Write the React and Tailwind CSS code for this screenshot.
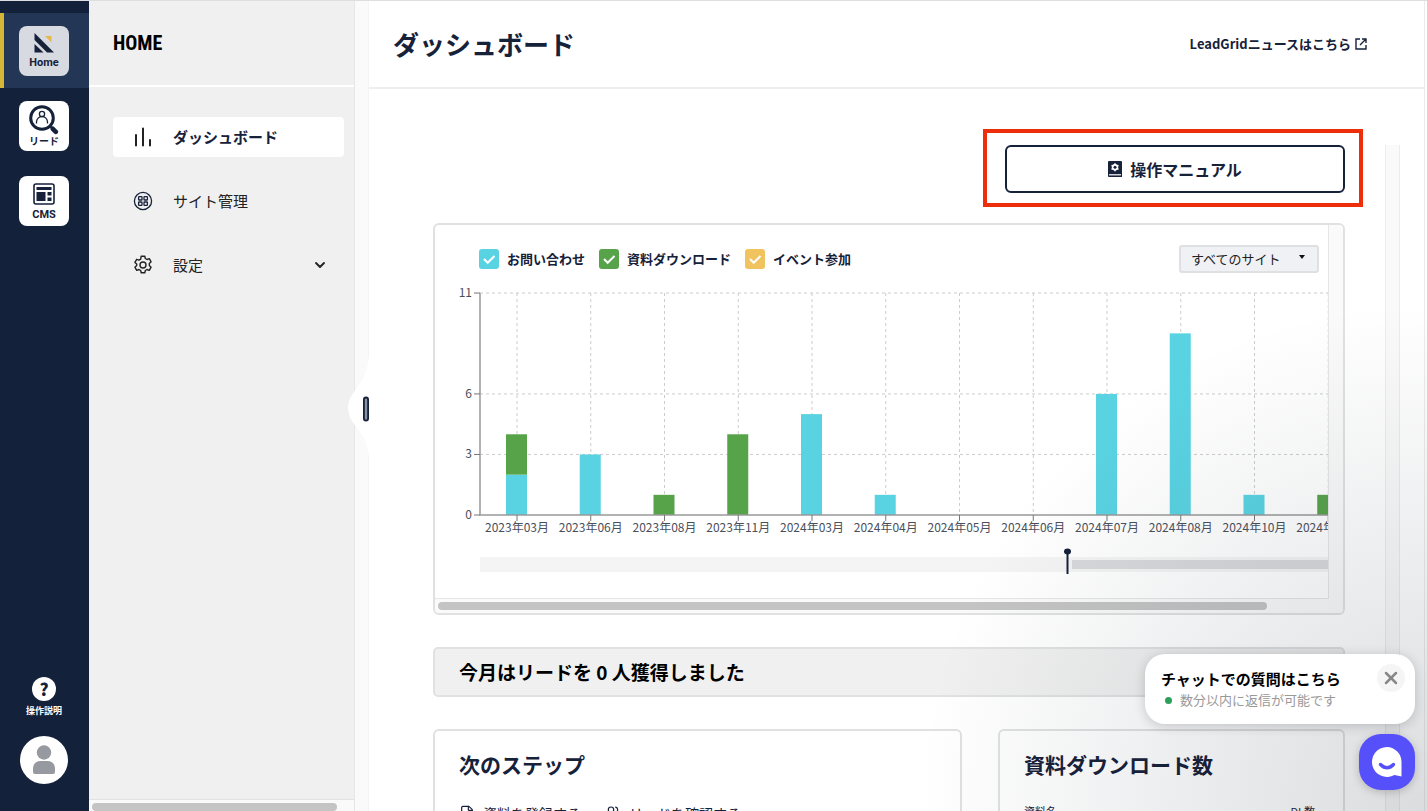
import { useState } from 'react'
import { ChevronDown, File, Users, X } from 'lucide-react'

const series = [
  { id: 'contact', label: 'お問い合わせ', box: 'bg-[#59d3e2]', color: '#59d3e2' },
  { id: 'download', label: '資料ダウンロード', box: 'bg-[#57a34a]', color: '#57a34a' },
  { id: 'event', label: 'イベント参加', box: 'bg-[#f0c35e]', color: '#f0c35e' }
]

const months = [
  { label: '2023年03月', contact: 2, download: 2, event: 0 },
  { label: '2023年06月', contact: 3, download: 0, event: 0 },
  { label: '2023年08月', contact: 0, download: 1, event: 0 },
  { label: '2023年11月', contact: 0, download: 4, event: 0 },
  { label: '2024年03月', contact: 5, download: 0, event: 0 },
  { label: '2024年04月', contact: 1, download: 0, event: 0 },
  { label: '2024年05月', contact: 0, download: 0, event: 0 },
  { label: '2024年06月', contact: 0, download: 0, event: 0 },
  { label: '2024年07月', contact: 6, download: 0, event: 0 },
  { label: '2024年08月', contact: 9, download: 0, event: 0 },
  { label: '2024年10月', contact: 1, download: 0, event: 0 },
  { label: '2024年11月', contact: 0, download: 1, event: 0 }
]

function HomeLogo() {
  return (
    <svg width="20" height="20" viewBox="0 0 20 20">
      <path d="M0.500 0L20 19.500H13L0.500 7Z" fill="#16213a" />
      <path d="M0.500 11L9.500 19.500H0.500Z" fill="#16213a" />
      <path d="M11 3H17.500V9.500Z" fill="#e9b64a" />
    </svg>
  )
}

function LeadIcon() {
  return (
    <svg width="30" height="30" viewBox="0 0 30 30" fill="none" stroke="#16213a">
      <circle cx="13" cy="13" r="11.300" strokeWidth="3" />
      <circle cx="13" cy="9" r="2.600" strokeWidth="1.300" />
      <path d="M7.500 18.500v-1.500a5.500 5.500 0 0 1 11 0v1.500" strokeWidth="1.300" />
      <path d="M21 21l2.500 2.500" strokeWidth="2" />
      <path d="M23.800 23.800l3 3" strokeWidth="4.600" strokeLinecap="round" />
    </svg>
  )
}

function CmsIcon() {
  return (
    <svg width="22" height="22" viewBox="0 0 22 22">
      <rect x="1" y="1" width="20" height="20" rx="2" fill="none" stroke="#16213a" strokeWidth="1.600" />
      <path d="M3.500 4h15v3h-15zM3.500 9h9v9h-9zM14.500 9h4v3.500h-4zM14.500 14.500h4v3.500h-4z" fill="#16213a" />
    </svg>
  )
}

function BarsIcon() {
  return (
    <svg width="20" height="20" viewBox="0 0 20 20" stroke="#222" strokeWidth="2" strokeLinecap="round">
      <path d="M3 8v10.500M10 1.500v17M17 13v5.500" />
    </svg>
  )
}

function SiteIcon() {
  return (
    <svg width="20" height="20" viewBox="0 0 20 20" fill="none" stroke="#16213a" strokeWidth="1.300">
      <circle cx="10" cy="10" r="8.600" />
      <rect x="5.600" y="5.600" width="3.400" height="3.400" rx="0.600" />
      <rect x="11" y="5.600" width="3.400" height="3.400" rx="0.600" />
      <rect x="5.600" y="11" width="3.400" height="3.400" rx="0.600" />
      <rect x="11" y="11" width="3.400" height="3.400" rx="0.600" />
    </svg>
  )
}

function GearIcon() {
  return (
    <svg width="20" height="20" viewBox="0 0 20 20" fill="none" stroke="#222" strokeWidth="1.400" strokeLinejoin="round">
      <path d="M8.200 1.200h3.600l.5 2.300 1.700 1 2.300-.8 1.800 3.100-1.800 1.600v2.200l1.800 1.600-1.800 3.100-2.300-.8-1.700 1-.5 2.300H8.200l-.5-2.300-1.700-1-2.300.8-1.800-3.100 1.800-1.600V9l-1.800-1.600 1.800-3.100 2.300.8 1.700-1z" />
      <circle cx="10" cy="10" r="3" />
    </svg>
  )
}

function ExternalIcon() {
  return (
    <svg width="12" height="12" viewBox="0 0 12 12" fill="none" stroke="#16213a" strokeWidth="1.400">
      <path d="M5 1H1v10h10V7M7 1h4v4M11 1L5 7" />
    </svg>
  )
}

function ManualIcon() {
  return (
    <svg width="14" height="16" viewBox="0 0 14 16">
      <path d="M1 0h12a1 1 0 0 1 1 1v15H1a1 1 0 0 1-1-1V1a1 1 0 0 1 1-1z" fill="#16213a" />
      <path d="M1 13.800h12" stroke="#fff" strokeWidth="1.200" />
      <circle cx="7" cy="6.300" r="2.300" fill="none" stroke="#fff" strokeWidth="1.900" />
      <path d="M7 2.300v8M3.500 4.300l7 4M3.500 8.300l7-4" stroke="#fff" strokeWidth="1.500" />
      <circle cx="7" cy="6.300" r="1.500" fill="#16213a" />
    </svg>
  )
}

function LeadChart({ active }) {
  const y = v => 230 - v * 20.18
  const x = i => 82 + i * 73.75
  return (
    <svg width="965" height="313" viewBox="0 0 965 313" className="block max-w-none">
      {[3, 6, 11].map(v => (
        <path key={v} d={`M45 ${y(v)}H965`} stroke="#ccc" strokeDasharray="3 3" />
      ))}
      {months.map((m, i) => (
        <path key={m.label} d={`M${x(i)} 8V230`} stroke="#ccc" strokeDasharray="3 3" />
      ))}
      {months.map((m, i) => {
        let total = 0
        return series.filter(s => active[s.id] && m[s.id] > 0).map(s => {
          total += m[s.id]
          return (
            <rect key={m.label + s.id} x={x(i) - 11} y={y(total)} width="21" height={m[s.id] * 20.18} fill={s.color} />
          )
        })
      })}
      {/* Axes */}
      <path d="M45 8V230H965" fill="none" stroke="#999" strokeWidth="1.500" />
      {[0, 3, 6, 11].map(v => (
        <g key={v}>
          <path d={`M39 ${y(v)}H45`} stroke="#777" />
          <text x="37" y={y(v) + 4} textAnchor="end" className="fill-[#4a4f5c] text-[12px]">{v}</text>
        </g>
      ))}
      {months.map((m, i) => (
        <g key={m.label}>
          <path d={`M${x(i)} 230v6`} stroke="#777" />
          <text x={x(i)} y="247" textAnchor="middle" className="fill-[#4a4f5c] text-[12px]">{m.label}</text>
        </g>
      ))}
      {/* Range slider */}
      <rect x="45" y="272" width="920" height="15" fill="#f4f4f4" />
      <rect x="637" y="275" width="328" height="9" fill="#d8d9dc" />
      <path d="M632.500 267v22" stroke="#16213a" strokeWidth="2" />
      <ellipse cx="632.500" cy="266.500" rx="3.500" ry="3" fill="#16213a" />
    </svg>
  )
}

export default function App() {
  const [active, setActive] = useState({ contact: true, download: true, event: true })
  const [chatOpen, setChatOpen] = useState(true)

  return (
    <div className="relative flex h-screen overflow-hidden border-t border-[#dcdfe2] bg-white font-['Noto_Sans_CJK_JP',sans-serif] text-[#16213a]">
      {/* App rail */}
      <nav className="flex w-[89px] shrink-0 flex-col bg-[#14213a] pt-3">
        <a href="#home" className="relative flex h-[75px] items-center justify-center bg-[#243655] pr-px">
          <span className="absolute inset-y-0 left-0 w-1 bg-[#d5b738]" />
          <span className="flex size-[50px] flex-col items-center justify-center gap-1 rounded-lg bg-[#d8dae1] pt-px">
            <HomeLogo />
            <span className="font-[Roboto,sans-serif] text-[11px] leading-3 font-bold">Home</span>
          </span>
        </a>
        <a href="#lead" className="flex h-[75px] items-center justify-center pr-px">
          <span className="flex size-[50px] flex-col items-center justify-center rounded-lg bg-white">
            <LeadIcon />
            <span className="text-[10px] leading-3 font-bold">リード</span>
          </span>
        </a>
        <a href="#cms" className="flex h-[75px] items-center justify-center pr-px">
          <span className="flex size-[50px] flex-col items-center justify-center gap-1 rounded-lg bg-white pt-[3px]">
            <CmsIcon />
            <span className="font-[Roboto,sans-serif] text-[11px] leading-3 font-bold">CMS</span>
          </span>
        </a>
        <div className="mt-auto flex flex-col items-center pr-px pb-[27px]">
          <a href="#help" className="flex flex-col items-center gap-1 text-white">
            <span className="flex size-6 items-center justify-center rounded-full bg-white text-[17px] leading-6 font-black text-[#16213a]">?</span>
            <span className="text-[9px] leading-3 font-bold">操作説明</span>
          </a>
          <button aria-label="アカウント" className="mt-[19px] flex size-12 items-center justify-center rounded-full bg-white">
            <svg width="24" height="30" viewBox="0 0 24 30" fill="#96999f">
              <circle cx="12" cy="7.500" r="7.200" />
              <path d="M1 27v-4a7 7 0 0 1 7-7h8a7 7 0 0 1 7 7v4a2 2 0 0 1-2 2H3a2 2 0 0 1-2-2z" />
            </svg>
          </button>
        </div>
      </nav>

      {/* Sub menu */}
      <aside className="flex w-[266px] shrink-0 flex-col border-r border-[#e6e6e6] bg-[#f0f0f0]">
        <div className="flex h-[86px] items-center border-b-2 border-white px-6">
          <h2 className="font-['Liberation_Sans_Narrow','Roboto_Condensed',Roboto,sans-serif] text-xl leading-6 font-bold text-black">HOME</h2>
        </div>
        <ul className="flex flex-1 flex-col gap-6 pt-[30px] pr-[10px] pl-6 text-[15px] leading-6">
          <li>
            <a href="#dashboard" className="flex h-10 items-center gap-5 rounded bg-white pl-5 font-bold">
              <BarsIcon />
              ダッシュボード
            </a>
          </li>
          <li>
            <a href="#sites" className="flex h-10 items-center gap-5 pl-5 text-[#222]">
              <SiteIcon />
              サイト管理
            </a>
          </li>
          <li>
            <button className="flex h-10 w-full items-center gap-5 pr-4 pl-5 text-[#222]">
              <GearIcon />
              設定
              <ChevronDown className="ml-auto size-4" strokeWidth={2.8} />
            </button>
          </li>
        </ul>
        <div className="h-3 border-t border-[#e2e2e2] bg-[#fafafa] pt-[3px] pl-[3px]">
          <div className="h-2 w-[245px] rounded-full bg-[#c4c4c4]" />
        </div>
      </aside>

      {/* Resize handle */}
      <div className="relative flex w-[14px] shrink-0 items-center border-r border-[#f4f4f4] bg-[#fafafa]">
        <svg width="24" height="104" viewBox="0 0 24 104" className="absolute -right-px">
          <path d="M24 0C22 34 4 34 3 54C4 74 22 74 24 104Z" fill="#fff" />
          <rect x="18.900" y="43.500" width="4.200" height="23" rx="2.100" fill="#8492a2" stroke="#16213a" strokeWidth="1.800" />
        </svg>
      </div>

      {/* Main */}
      <main className="mr-[2px] flex min-w-0 flex-1 flex-col border-r border-[#ececec]">
        <header className="flex h-[88px] shrink-0 items-center justify-between border-b-2 border-[#eee] pr-[57px] pl-6">
          <h1 className="text-[26px] leading-9 font-bold">ダッシュボード</h1>
          <a href="#news" className="flex items-center gap-1 text-[13px] leading-5 font-bold">
            LeadGridニュースはこちら
            <ExternalIcon />
          </a>
        </header>

        <div className="mt-14 mr-6 flex min-h-0 flex-1">
          <div className="flex min-w-0 flex-1 flex-col pr-10 pl-16">
            <div className="flex justify-end">
              <div className="relative w-[340px]">
                <button className="flex h-12 w-full items-center justify-center gap-2 rounded-md border-2 border-[#16213a] bg-white text-base font-bold">
                  <ManualIcon />
                  操作マニュアル
                </button>
                <span className="pointer-events-none absolute -top-4 -right-[18px] -bottom-[14px] -left-[22px] border-4 border-[#ee2d0a]" />
              </div>
            </div>

            {/* Chart */}
            <section className="mt-[30px] flex shrink-0 overflow-hidden rounded-md border-2 border-[#e0e1e1]">
              <div className="min-w-0 flex-1">
                <div className="overflow-hidden border-r border-b border-[#e6e6e6]">
                  <div className="flex h-[60px] items-center justify-between pt-2 pr-[9px] pl-11">
                    <div className="flex items-center gap-[14px]">
                      {series.map(s => (
                        <label key={s.id} className="flex items-center gap-2 text-[13px] leading-5 font-bold">
                          <span className={`relative size-5 rounded-[3px] ${s.box}`}>
                            <input
                              type="checkbox"
                              checked={active[s.id]}
                              onChange={() => setActive({ ...active, [s.id]: !active[s.id] })}
                              className="block size-5 appearance-none"
                            />
                            {active[s.id] && (
                              <svg viewBox="0 0 20 20" className="pointer-events-none absolute inset-0 size-5" fill="none" stroke="#fff" strokeWidth="2">
                                <path d="M5 10l3.700 3.800L15.500 7" />
                              </svg>
                            )}
                          </span>
                          {s.label}
                        </label>
                      ))}
                    </div>
                    <div className="relative">
                      <select aria-label="サイト" className="block h-7 w-[140px] appearance-none rounded-[3px] border-2 border-[#dfe0e2] bg-[#f0f1f4] pl-[10px] text-[13px] leading-5 text-[#222]">
                        <option>すべてのサイト</option>
                      </select>
                      <span className="pointer-events-none absolute top-[10px] right-[14px] border-x-[3px] border-t-4 border-x-transparent border-t-[#111]" />
                    </div>
                  </div>
                  <LeadChart active={active} />
                </div>
                <div className="h-[14px] bg-[#fafafa] pt-[3px] pl-[3px]">
                  <div className="h-2 w-[93%] rounded-full bg-[#c4c4c4]" />
                </div>
              </div>
              <div className="w-[14px] shrink-0 bg-[#fafafa]" />
            </section>

            <p className="mt-8 flex h-[50px] shrink-0 items-center rounded-[5px] border-2 border-[#e0e1e1] bg-[#f0f0f0] px-6 text-[19px] leading-7 font-bold text-black">
              今月はリードを 0 人獲得しました
            </p>

            <div className="mt-8 grid grid-cols-[529fr_347fr] gap-9">
              <section className="h-60 rounded-md border-2 border-[#e0e1e1] px-6 pt-4">
                <h2 className="text-[21px] leading-[34px] font-bold">次のステップ</h2>
                <div className="mt-5 flex gap-6 text-sm leading-6">
                  <a href="#register" className="flex items-center gap-2">
                    <File className="size-4" strokeWidth={1.8} />
                    資料を登録する
                  </a>
                  <a href="#leads" className="flex items-center gap-2">
                    <Users className="size-4" strokeWidth={1.8} />
                    リードを確認する
                  </a>
                </div>
              </section>
              <section className="h-60 rounded-md border-2 border-[#e0e1e1] px-6 pt-4">
                <h2 className="text-[21px] leading-[34px] font-bold">資料ダウンロード数</h2>
                <table className="mt-5 w-full text-[11px] leading-5">
                  <thead>
                    <tr>
                      <th className="text-left font-normal">資料名</th>
                      <th className="pr-1 text-right font-normal">DL数</th>
                    </tr>
                  </thead>
                </table>
              </section>
            </div>
          </div>
          <div className="w-[15px] shrink-0 border-x border-[#ececec] bg-[#fafafa]" />
        </div>
      </main>

      {/* Chat */}
      <div className="pointer-events-none absolute right-0 bottom-0 size-[500px] bg-[radial-gradient(ellipse_at_bottom_right,rgba(29,39,54,0.16)_0,rgba(29,39,54,0)_72%)]" />
      {chatOpen && (
        <div className="absolute right-3 bottom-[87px] flex h-[70px] w-[270px] justify-between rounded-[20px] bg-white pt-[14px] pr-[10px] pl-4 shadow-[0_2px_12px_rgba(0,0,0,0.18)]">
          <div>
            <p className="text-[15px] leading-[22px] font-bold text-black">チャットでの質問はこちら</p>
            <p className="flex items-center gap-2 pl-1 text-[13px] leading-5 text-[#999]">
              <span className="size-[7px] rounded-full bg-[#2ca05a]" />
              数分以内に返信が可能です
            </p>
          </div>
          <button aria-label="閉じる" onClick={() => setChatOpen(false)} className="-mt-1 flex size-7 items-center justify-center rounded-full bg-[#f5f5f5]">
            <X className="size-5 text-[#888]" strokeWidth={3} />
          </button>
        </div>
      )}
      <button aria-label="チャット" className="absolute right-3 bottom-[21px] flex size-14 items-center justify-center rounded-[22px] bg-[#5650fb] shadow-[0_2px_8px_rgba(0,0,0,0.2)]">
        <svg width="30" height="30" viewBox="0 0 30 30">
          <path d="M15 0a15 15 0 1 0 7.500 28L29.500 29.500V15A15 15 0 0 0 15 0z" fill="#fff" />
          <path d="M8.500 17.500q6.500 6.500 13 0" fill="none" stroke="#5650fb" strokeWidth="3.400" strokeLinecap="round" />
        </svg>
      </button>
    </div>
  )
}
